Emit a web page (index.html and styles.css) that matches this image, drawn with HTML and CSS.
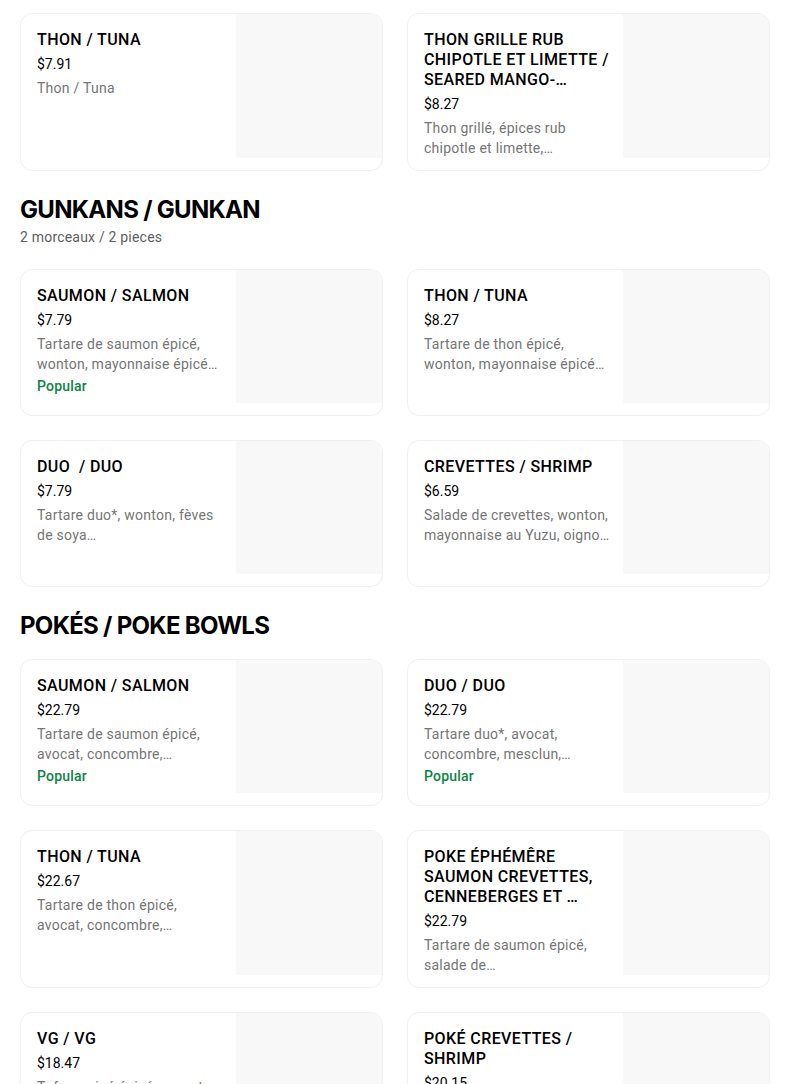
FILE: index.html
```html
<!DOCTYPE html>
<html lang="fr">
<head>
<meta charset="utf-8">
<title>Menu</title>
<link rel="stylesheet" href="styles.css">
</head>
<body>
<main class="menu">
  <section class="section section--first">
    <div class="grid">
      <article class="card">
        <div class="card-body">
          <h3 class="card-title">THON / TUNA</h3>
          <div class="card-price">$7.91</div>
          <p class="card-desc">Thon / Tuna</p>
        </div>
        <div class="card-img"></div>
      </article>
      <article class="card">
        <div class="card-body">
          <h3 class="card-title">THON GRILLE RUB CHIPOTLE ET LIMETTE / SEARED MANGO-…</h3>
          <div class="card-price">$8.27</div>
          <p class="card-desc">Thon grillé, épices rub chipotle et limette,…</p>
        </div>
        <div class="card-img"></div>
      </article>
    </div>
  </section>

  <section class="section">
    <header class="section-head">
      <h2 class="section-title">GUNKANS / GUNKAN</h2>
      <p class="section-sub">2 morceaux / 2 pieces</p>
    </header>
    <div class="grid">
      <article class="card">
        <div class="card-body">
          <h3 class="card-title">SAUMON / SALMON</h3>
          <div class="card-price">$7.79</div>
          <p class="card-desc">Tartare de saumon épicé, wonton, mayonnaise épicé…</p>
          <div class="card-tag">Popular</div>
        </div>
        <div class="card-img"></div>
      </article>
      <article class="card">
        <div class="card-body">
          <h3 class="card-title">THON / TUNA</h3>
          <div class="card-price">$8.27</div>
          <p class="card-desc">Tartare de thon épicé, wonton, mayonnaise épicé…</p>
        </div>
        <div class="card-img"></div>
      </article>
      <article class="card">
        <div class="card-body">
          <h3 class="card-title">DUO&nbsp; / DUO</h3>
          <div class="card-price">$7.79</div>
          <p class="card-desc">Tartare duo*, wonton, fèves de soya…</p>
        </div>
        <div class="card-img"></div>
      </article>
      <article class="card">
        <div class="card-body">
          <h3 class="card-title">CREVETTES / SHRIMP</h3>
          <div class="card-price">$6.59</div>
          <p class="card-desc">Salade de crevettes, wonton, mayonnaise au Yuzu, oigno…</p>
        </div>
        <div class="card-img"></div>
      </article>
    </div>
  </section>

  <section class="section">
    <header class="section-head">
      <h2 class="section-title">POKÉS / POKE BOWLS</h2>
    </header>
    <div class="grid">
      <article class="card">
        <div class="card-body">
          <h3 class="card-title">SAUMON / SALMON</h3>
          <div class="card-price">$22.79</div>
          <p class="card-desc">Tartare de saumon épicé, avocat, concombre,…</p>
          <div class="card-tag">Popular</div>
        </div>
        <div class="card-img"></div>
      </article>
      <article class="card">
        <div class="card-body">
          <h3 class="card-title">DUO / DUO</h3>
          <div class="card-price">$22.79</div>
          <p class="card-desc">Tartare duo*, avocat, concombre, mesclun,…</p>
          <div class="card-tag">Popular</div>
        </div>
        <div class="card-img"></div>
      </article>
      <article class="card">
        <div class="card-body">
          <h3 class="card-title">THON / TUNA</h3>
          <div class="card-price">$22.67</div>
          <p class="card-desc">Tartare de thon épicé, avocat, concombre,…</p>
        </div>
        <div class="card-img"></div>
      </article>
      <article class="card">
        <div class="card-body">
          <h3 class="card-title">POKE ÉPHÉMÊRE SAUMON CREVETTES, CENNEBERGES ET …</h3>
          <div class="card-price">$22.79</div>
          <p class="card-desc">Tartare de saumon épicé, salade de…</p>
        </div>
        <div class="card-img"></div>
      </article>
      <article class="card">
        <div class="card-body">
          <h3 class="card-title">VG / VG</h3>
          <div class="card-price">$18.47</div>
          <p class="card-desc">Tofu mariné épicé, avocat, concombre,…</p>
        </div>
        <div class="card-img"></div>
      </article>
      <article class="card">
        <div class="card-body">
          <h3 class="card-title">POKÉ CREVETTES / SHRIMP</h3>
          <div class="card-price">$20.15</div>
          <p class="card-desc">Crevettes, avocat, concombre, mesclun,…</p>
        </div>
        <div class="card-img"></div>
      </article>
    </div>
  </section>
</main>
</body>
</html>
```

FILE: styles.css
```css
* { box-sizing: border-box; }

html, body {
  margin: 0;
  padding: 0;
  background: #ffffff;
}

body {
  font-family: Roboto, "Liberation Sans", sans-serif;
  color: #000000;
  -webkit-font-smoothing: antialiased;
}

.menu {
  width: 750px;
  margin: 0 0 0 20px;
  padding-top: 13px;
}

.section {
  padding-top: 23px;
}

.section--first {
  padding-top: 0;
}

.section-head {
  margin-bottom: 17px;
}

.section-title {
  margin: 0;
  font-family: Inter, "Noto Sans", sans-serif;
  font-size: 24px;
  line-height: 32px;
  font-weight: 700;
  letter-spacing: -0.7px;
}

.section-sub {
  margin: 1px 0 0;
  padding-bottom: 5px;
  font-size: 14px;
  line-height: 20px;
  letter-spacing: 0.2px;
  color: #5e5e5e;
}

.grid {
  display: grid;
  grid-template-columns: 1fr 1fr;
  column-gap: 24px;
  row-gap: 24px;
}

.card {
  display: grid;
  grid-template-columns: 1fr 146px;
  min-height: 147px;
  border: 1px solid #f0f0f0;
  border-radius: 12px;
  overflow: hidden;
  background: #ffffff;
}

.card-body {
  padding: 16px 12px 12px 16px;
  min-width: 0;
}

.card-title {
  margin: 0;
  font-size: 16px;
  line-height: 20px;
  font-weight: 500;
  letter-spacing: 0.4px;
  display: -webkit-box;
  -webkit-box-orient: vertical;
  -webkit-line-clamp: 3;
  overflow: hidden;
}

.card-price {
  margin-top: 4px;
  font-size: 14px;
  line-height: 20px;
  color: #000000;
}

.card-desc {
  margin: 4px 0 0;
  font-size: 14px;
  line-height: 20px;
  letter-spacing: 0.25px;
  color: #757575;
  display: -webkit-box;
  -webkit-box-orient: vertical;
  -webkit-line-clamp: 2;
  overflow: hidden;
}

.card-tag {
  margin-top: 2px;
  font-size: 14px;
  line-height: 20px;
  font-weight: 500;
  letter-spacing: 0.2px;
  color: #0e8345;
}

.card-img {
  background: #f8f8f8;
  margin-bottom: 12px;
}
```
